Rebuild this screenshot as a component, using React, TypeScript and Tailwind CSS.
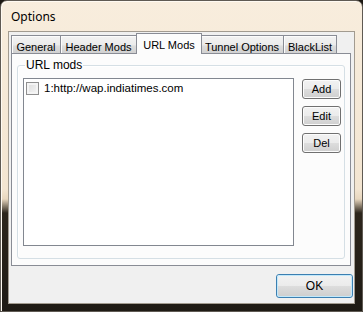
const font = "font-['Liberation_Sans',Arial,sans-serif]";

const tabs = [
  { label: 'General', width: 'w-[50px]' },
  { label: 'Header Mods', width: 'w-[76px]' },
  { label: 'URL Mods', width: 'w-[66px]', active: true },
  { label: 'Tunnel Options', width: 'w-[83px]' },
  { label: 'BlackList', width: 'w-[53px]' },
];

function Tab({ label, width, active }: { label: string; width: string; active?: boolean }) {
  if (active) {
    return (
      <div
        className={`${width} -mx-[1px] z-10 flex h-[21px] items-start justify-center border border-b-0 border-[#898c95] bg-[#fcfcfc] pt-[3px] text-[11px] text-black`}
      >
        {label}
      </div>
    );
  }
  return (
    <div
      className={`${width} mt-[2px] flex h-[19px] items-start justify-center border border-b-0 border-l-0 border-[#898c95] bg-[linear-gradient(to_bottom,#f3f3f3_0%,#ebebeb_50%,#dddddd_55%,#cfcfcf_100%)] pt-[3px] text-[11px] text-black shadow-[inset_1px_1px_0_#fcfcfc] first:border-l`}
    >
      {label}
    </div>
  );
}

function SmallButton({ label }: { label: string }) {
  return (
    <button
      type="button"
      className="h-[20px] w-[39px] rounded-[3px] border border-[#707070] bg-[linear-gradient(to_bottom,#f2f2f2_0%,#ebebeb_50%,#dddddd_51%,#cfcfcf_100%)] text-[11px] leading-none text-black shadow-[inset_0_0_0_1px_#fcfcfc]"
    >
      {label}
    </button>
  );
}

export default function App() {
  return (
    <div className={`${font} h-[312px] w-[363px] bg-[#1c1812]`}>
      <div className="flex h-[312px] w-[363px] flex-col rounded-t-[7px] border border-[#5f5a53] bg-[linear-gradient(to_bottom,#f8eddd_0px,#f3e5d1_188px,#e8d7bf_198px,#2d261c_212px,#1e1a14_312px)] shadow-[inset_1px_1px_0_#fffaf2]">
        <div className="flex h-[30px] shrink-0 items-center pl-[10px] pt-[1px] font-['Noto_Sans',sans-serif] text-[12px] text-black">
          Options
        </div>
        <div className="ml-[7px] mr-[7px] flex h-[273px] flex-col border border-[#a29b90] bg-[#f0f0f0]">
          <div className="ml-[2px] mt-[1px] flex">
            {tabs.map((t) => (
              <Tab key={t.label} {...t} />
            ))}
          </div>
          <div className="-mt-[1px] ml-[2px] h-[213px] w-[340px] border border-[#898c95] bg-[#fcfcfc] px-[5px] pt-[5px]">
            <fieldset className="h-[200px] rounded-[3px] border border-[#d5dfe5] pl-[5px] shadow-[inset_1px_1px_0_#ffffff]">
              <legend className="ml-[2px] px-[1px] text-[12px] leading-[13px] text-black">URL mods</legend>
              <div className="mt-[6px] flex gap-[8px]">
                <div className="h-[168px] w-[271px] border border-[#828790] bg-white pl-[2px] pt-[2px]">
                  <div className="flex items-center gap-[5px]">
                    <span className="h-[13px] w-[13px] border border-[#8f8f8f] bg-[linear-gradient(135deg,#dcdcdc,#f6f6f6)] shadow-[inset_0_0_0_2px_#f4f4f4]" />
                    <span className="text-[11.5px] leading-[14px] text-black">1:http://wap.indiatimes.com</span>
                  </div>
                </div>
                <div className="flex flex-col gap-[7px] pt-[1px]">
                  <SmallButton label="Add" />
                  <SmallButton label="Edit" />
                  <SmallButton label="Del" />
                </div>
              </div>
            </fieldset>
          </div>
          <div className="flex flex-1 items-start justify-end pr-[1px] pt-[8px]">
            <button
              type="button"
              className="h-[24px] w-[77px] rounded-[3px] border border-[#3c7fb1] bg-[linear-gradient(to_bottom,#eaf6fd_0%,#d9f0fc_50%,#bee6fd_51%,#a7d9f5_100%)] p-[1px] text-[12px] text-black"
            >
              <span className="flex h-full w-full items-center justify-center rounded-[2px] bg-[linear-gradient(to_bottom,#f2f2f2_0%,#ebebeb_50%,#dddddd_51%,#cfcfcf_100%)] shadow-[0_0_0_1px_#c2e8fa]">
                OK
              </span>
            </button>
          </div>
        </div>
      </div>
    </div>
  );
}
